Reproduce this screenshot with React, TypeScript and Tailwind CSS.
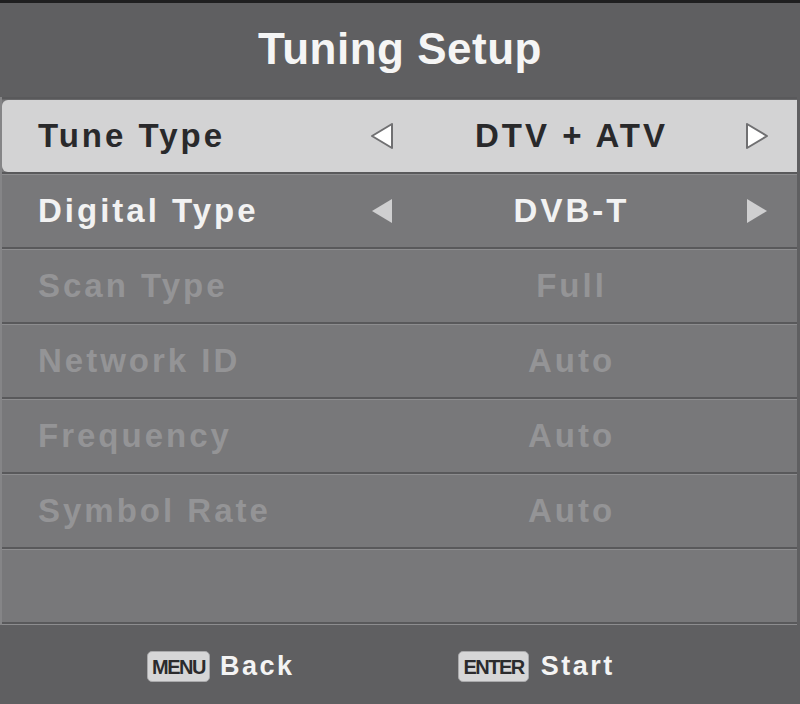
import React from "react";

type Row = {
  label: string;
  value?: string;
  state: "selected" | "active" | "disabled" | "empty";
};

const rows: Row[] = [
  { label: "Tune Type", value: "DTV + ATV", state: "selected" },
  { label: "Digital Type", value: "DVB-T", state: "active" },
  { label: "Scan Type", value: "Full", state: "disabled" },
  { label: "Network ID", value: "Auto", state: "disabled" },
  { label: "Frequency", value: "Auto", state: "disabled" },
  { label: "Symbol Rate", value: "Auto", state: "disabled" },
  { label: "", state: "empty" },
];

// little triangle used for the left/right value arrows
function Arrow({ dir, selected }: { dir: "left" | "right"; selected: boolean }) {
  const pts = dir === "left" ? "22,1 22,25 2,13" : "2,1 2,25 22,13";
  return (
    <svg width="24" height="26" viewBox="0 0 24 26">
      <polygon
        points={pts}
        fill={selected ? "#ffffff" : "#cfcfd0"}
        stroke={selected ? "#707072" : "none"}
        strokeWidth={selected ? 2 : 0}
        strokeLinejoin="round"
      />
    </svg>
  );
}

function Key({ children }: { children: React.ReactNode }) {
  return (
    <span className="inline-flex h-[31px] min-w-[62px] items-center justify-center rounded-[5px] border border-[#a9a9ab] bg-[#d6d6d7] px-[4px] font-['Liberation_Sans_Narrow','Liberation_Sans',sans-serif] text-[20px] font-bold tracking-[-1.5px] text-[#2b2b2d]">
      {children}
    </span>
  );
}

export default function App() {
  return (
    <div className="flex h-[704px] w-[800px] flex-col overflow-hidden bg-[#5f5f61] font-['Liberation_Sans',Arial,sans-serif]">
      {/* top edge */}
      <div className="h-[3px] bg-[#1f1f20]" />

      {/* title bar */}
      <div className="flex h-[94px] items-center justify-center bg-[#5f5f61] pb-[2px]">
        <h1 className="text-[44px] font-bold tracking-[0.5px] text-[#f5f5f5]">Tuning Setup</h1>
      </div>

      {/* menu rows */}
      <div className="flex flex-col border-l-[2px] border-r-[3px] border-l-[#858587] border-r-[#5f5f61] bg-[#78787a]">
        {rows.map((r, i) => (
          <div key={i} className="flex flex-col">
            <div className="h-[2px] bg-[#59595b]" />
            <div className={r.state === "selected" ? "h-[1px] bg-[#68686a]" : "h-[1px] bg-[#8d8d8f]"} />
            <div
              className={
                "flex h-[72px] items-center text-[33px] font-bold tracking-[3px] " +
                (r.state === "selected"
                  ? "rounded-l-[6px] bg-[#d3d3d4] text-[#29292b]"
                  : r.state === "active"
                  ? "bg-[#78787a] text-[#f2f2f2]"
                  : "bg-[#78787a] text-[#949496]")
              }
            >
              <div className="w-[362px] pl-[36px]">{r.label}</div>
              {r.value && (
                <div className="flex flex-1 items-center">
                  <div className="flex w-[36px] justify-center">
                    {r.state !== "disabled" && <Arrow dir="left" selected={r.state === "selected"} />}
                  </div>
                  <div className="flex-1 pl-[4px] text-center">{r.value}</div>
                  <div className="flex w-[36px] justify-center">
                    {r.state !== "disabled" && <Arrow dir="right" selected={r.state === "selected"} />}
                  </div>
                  <div className="w-[22px]" />
                </div>
              )}
            </div>
          </div>
        ))}
        <div className="h-[2px] bg-[#59595b]" />
        <div className="h-[1px] bg-[#8d8d8f]" />
      </div>

      {/* footer hints */}
      <div className="flex flex-1 items-center gap-[164px] bg-[#5f5f61] pl-[147px] pt-[4px] text-[27px] font-bold tracking-[2.5px] text-[#f4f4f4]">
        <div className="flex items-center gap-[10px]">
          <Key>MENU</Key>
          <span>Back</span>
        </div>
        <div className="flex items-center gap-[12px]">
          <Key>ENTER</Key>
          <span>Start</span>
        </div>
      </div>
    </div>
  );
}
